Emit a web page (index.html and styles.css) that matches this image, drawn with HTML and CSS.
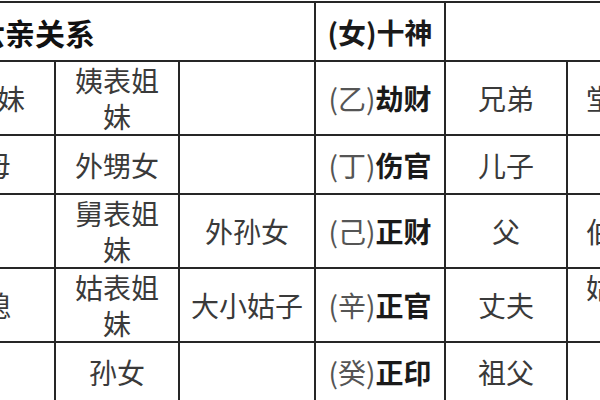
FILE: index.html
```html
<!DOCTYPE html>
<html lang="zh-CN">
<head>
<meta charset="utf-8">
<link rel="stylesheet" href="styles.css">
</head>
<body>
<div class="view">
  <table class="kin">
    <colgroup>
      <col class="c1"><col class="c2"><col class="c3"><col class="c4"><col class="c5"><col class="c6">
    </colgroup>
    <tr class="h59">
      <th colspan="3" class="title">女命六亲关系</th>
      <th class="god-head">(女)十神</th>
      <th colspan="2"></th>
    </tr>
    <tr class="h73">
      <td>亲姐妹</td>
      <td>姨表姐妹</td>
      <td></td>
      <td class="god"><span class="stem">(乙)</span><b>劫财</b></td>
      <td>兄弟</td>
      <td>堂兄弟</td>
    </tr>
    <tr class="h59">
      <td>岳母</td>
      <td>外甥女</td>
      <td></td>
      <td class="god"><span class="stem">(丁)</span><b>伤官</b></td>
      <td>儿子</td>
      <td></td>
    </tr>
    <tr class="h74">
      <td></td>
      <td>舅表姐妹</td>
      <td>外孙女</td>
      <td class="god"><span class="stem">(己)</span><b>正财</b></td>
      <td>父</td>
      <td>伯叔父</td>
    </tr>
    <tr class="h73">
      <td>儿媳</td>
      <td>姑表姐妹</td>
      <td>大小姑子</td>
      <td class="god"><span class="stem">(辛)</span><b>正官</b></td>
      <td>丈夫</td>
      <td>姑表兄弟</td>
    </tr>
    <tr class="h60">
      <td></td>
      <td>孙女</td>
      <td></td>
      <td class="god"><span class="stem">(癸)</span><b>正印</b></td>
      <td>祖父</td>
      <td></td>
    </tr>
  </table>
</div>
</body>
</html>
```
FILE: styles.css
```css
html, body {
  margin: 0;
  padding: 0;
  background: #ffffff;
}
.view {
  width: 600px;
  height: 400px;
  overflow: hidden;
  background: #ffffff;
}
.kin {
  border-collapse: collapse;
  table-layout: fixed;
  width: 778px;
  margin-left: -90px;
  margin-top: 1px;
  font-family: "Noto Sans CJK SC", "Noto Sans", sans-serif;
  font-size: 28px;
  color: #3a3a3a;
}
.c1 { width: 144px; }
.c2 { width: 124px; }
.c3 { width: 136px; }
.c4 { width: 130px; }
.c5 { width: 122px; }
.c6 { width: 122px; }
.kin td, .kin th {
  border: 2px solid #262626;
  padding: 0 8px;
  line-height: 36px;
  text-align: center;
  vertical-align: middle;
  font-weight: 400;
  overflow: hidden;
}
.h59 { height: 59px; }
.h60 { height: 60px; }
.h73 { height: 73px; }
.h74 { height: 74px; }
.kin th.title {
  text-align: left;
  padding-left: 3px;
  font-size: 30px;
  font-weight: 700;
  color: #111111;
}
.kin th.god-head {
  font-weight: 700;
  color: #1a1a1a;
  white-space: nowrap;
  padding: 0;
}
.kin td.god {
  white-space: nowrap;
  padding: 0;
}
.stem {
  color: #555555;
  font-weight: 400;
}
.god b {
  font-weight: 700;
  color: #1a1a1a;
}
```
